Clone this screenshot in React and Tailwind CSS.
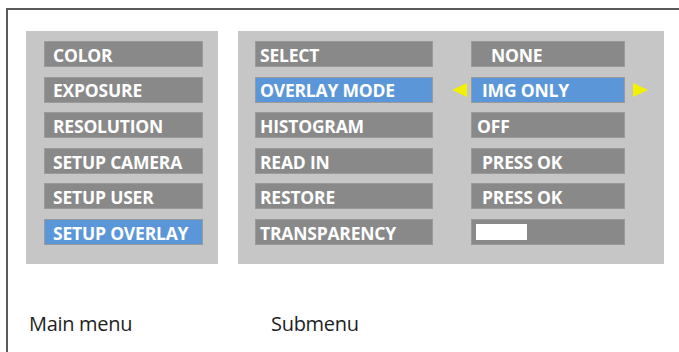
import React from 'react';

const mainItems = ['COLOR', 'EXPOSURE', 'RESOLUTION', 'SETUP CAMERA', 'SETUP USER', 'SETUP OVERLAY'];

const subItems = [
  { label: 'SELECT', value: 'NONE', valuePad: 'pl-[19px]' },
  { label: 'OVERLAY MODE', value: 'IMG ONLY', valuePad: 'pl-[10px]', active: true },
  { label: 'HISTOGRAM', value: 'OFF', valuePad: 'pl-[5px]' },
  { label: 'READ IN', value: 'PRESS OK', valuePad: 'pl-[10px]' },
  { label: 'RESTORE', value: 'PRESS OK', valuePad: 'pl-[10px]' },
  { label: 'TRANSPARENCY', bar: true },
];

const boxBase =
  'h-[26px] flex items-center pt-[3px] border border-[#9a9a9a] text-white font-bold text-[17.5px] leading-none tracking-[-0.2px] whitespace-nowrap';

const Arrow = ({ dir }) => (
  <svg width="15" height="14" viewBox="0 0 15 14" className="shrink-0">
    {dir === 'left' ? (
      <polygon points="15,0 15,14 0,7" fill="#f2f200" />
    ) : (
      <polygon points="0,0 0,14 15,7" fill="#f2f200" />
    )}
  </svg>
);

export default function App() {
  return (
    <div
      className="w-[679px] h-[352px] bg-white pt-2 pl-[6px] overflow-hidden"
      style={{ fontFamily: '"Open Sans", "Liberation Sans", sans-serif' }}
    >
      <div className="h-full border-t-2 border-l-2 border-[#5a5a5a] pt-[21px] pl-[18px]">
        <div className="flex gap-5">
          {/* Main menu */}
          <div className="w-[192px] h-[233px] bg-[#c6c6c6] pt-[10px] pl-[18px]">
            <div className="flex flex-col gap-[9.6px]">
              {mainItems.map((item) => (
                <div
                  key={item}
                  className={`${boxBase} w-[159px] pl-[8px] ${
                    item === 'SETUP OVERLAY' ? 'bg-[#5b97d8] border-[#6aa2de]' : 'bg-[#898989]'
                  }`}
                >
                  {item}
                </div>
              ))}
            </div>
          </div>

          {/* Submenu */}
          <div className="w-[426px] h-[233px] bg-[#c6c6c6] pt-[10px] pl-[17px]">
            <div className="flex flex-col gap-[9.6px]">
              {subItems.map((row) => (
                <div key={row.label} className="flex items-center">
                  <div
                    className={`${boxBase} w-[178px] pl-[4px] ${
                      row.active ? 'bg-[#5b97d8] border-[#6aa2de]' : 'bg-[#898989]'
                    }`}
                  >
                    {row.label}
                  </div>
                  <div className="w-[38px] flex justify-end pr-[4px]">
                    {row.active && <Arrow dir="left" />}
                  </div>
                  <div
                    className={`${boxBase} w-[154px] ${row.valuePad || 'pl-[4px]'} ${
                      row.active ? 'bg-[#5b97d8] border-[#6aa2de] text-[#f0f020]' : 'bg-[#898989]'
                    }`}
                  >
                    {row.bar ? <div className="w-[51px] h-[16px] -mt-[3px] bg-white" /> : row.value}
                  </div>
                  <div className="pl-[8px]">{row.active && <Arrow dir="right" />}</div>
                </div>
              ))}
            </div>
          </div>
        </div>

        <div className="flex mt-[47px] text-[20px] leading-[26px] text-[#1e1e1e] tracking-[-0.3px]">
          <div className="w-[245px] pl-[3px]">Main menu</div>
          <div>Submenu</div>
        </div>
      </div>
    </div>
  );
}
